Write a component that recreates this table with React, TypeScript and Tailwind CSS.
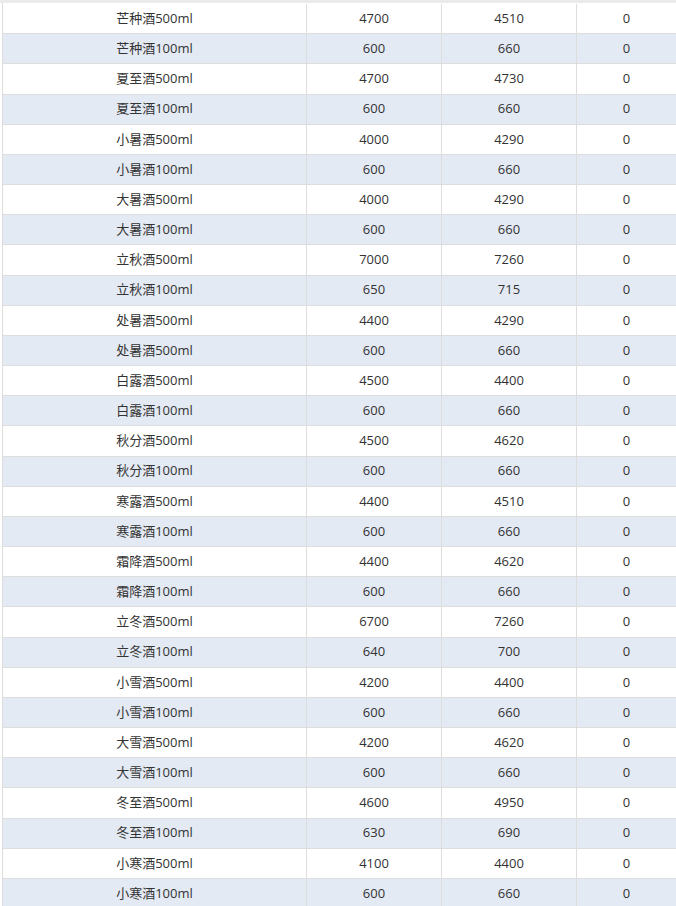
import React from "react";

const rows: [string, string, string, string][] = [
  ["芒种酒500ml", "4700", "4510", "0"],
  ["芒种酒100ml", "600", "660", "0"],
  ["夏至酒500ml", "4700", "4730", "0"],
  ["夏至酒100ml", "600", "660", "0"],
  ["小暑酒500ml", "4000", "4290", "0"],
  ["小暑酒100ml", "600", "660", "0"],
  ["大暑酒500ml", "4000", "4290", "0"],
  ["大暑酒100ml", "600", "660", "0"],
  ["立秋酒500ml", "7000", "7260", "0"],
  ["立秋酒100ml", "650", "715", "0"],
  ["处暑酒500ml", "4400", "4290", "0"],
  ["处暑酒500ml", "600", "660", "0"],
  ["白露酒500ml", "4500", "4400", "0"],
  ["白露酒100ml", "600", "660", "0"],
  ["秋分酒500ml", "4500", "4620", "0"],
  ["秋分酒100ml", "600", "660", "0"],
  ["寒露酒500ml", "4400", "4510", "0"],
  ["寒露酒100ml", "600", "660", "0"],
  ["霜降酒500ml", "4400", "4620", "0"],
  ["霜降酒100ml", "600", "660", "0"],
  ["立冬酒500ml", "6700", "7260", "0"],
  ["立冬酒100ml", "640", "700", "0"],
  ["小雪酒500ml", "4200", "4400", "0"],
  ["小雪酒100ml", "600", "660", "0"],
  ["大雪酒500ml", "4200", "4620", "0"],
  ["大雪酒100ml", "600", "660", "0"],
  ["冬至酒500ml", "4600", "4950", "0"],
  ["冬至酒100ml", "630", "690", "0"],
  ["小寒酒500ml", "4100", "4400", "0"],
  ["小寒酒100ml", "600", "660", "0"],
];

export default function App() {
  return (
    <div
      className="w-[676px] h-[906px] overflow-hidden bg-white text-[13px] text-[#333333]"
      style={{ fontFamily: '"Open Sans", "Noto Sans CJK SC", sans-serif' }}
    >
      <div className="h-[3px] bg-[#ebebeb]" />
      <div className="ml-[2px] border-l border-[#dddddd] pt-px">
        {rows.map((r, i) => (
          <div
            key={i}
            className={
              "grid grid-cols-[304px_135px_135px_1fr] h-[30.18px] border-b border-[#dddddd] " +
              (i % 2 === 1 ? "bg-[#e4eaf4]" : "bg-white")
            }
          >
            <div className="flex items-center justify-center border-r border-[#dddddd]">{r[0]}</div>
            <div className="flex items-center justify-center border-r border-[#dddddd]">{r[1]}</div>
            <div className="flex items-center justify-center border-r border-[#dddddd]">{r[2]}</div>
            <div className="flex items-center justify-center">{r[3]}</div>
          </div>
        ))}
      </div>
    </div>
  );
}
